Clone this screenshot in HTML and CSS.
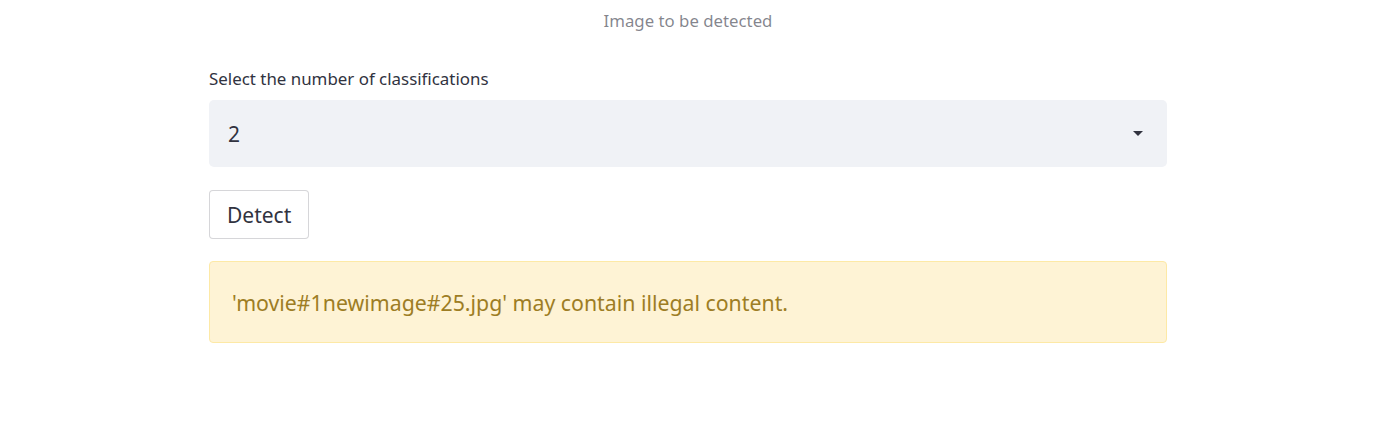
FILE: index.html
```html
<!DOCTYPE html>
<html lang="en">
<head>
    <meta charset="UTF-8">
    <title>Image Detection</title>
    <link rel="stylesheet" href="styles.css">
</head>
<body>
    <div class="main">
        <div class="caption">Image to be detected</div>

        <div class="field">
            <label class="field-label">Select the number of classifications</label>
            <div class="select">
                <span class="select-value">2</span>
                <svg class="select-arrow" width="10" height="6" viewBox="0 0 10 6">
                    <path d="M0 0 L10 0 L5 5 Z" fill="#31333f"/>
                </svg>
            </div>
        </div>

        <div class="actions">
            <button class="btn">Detect</button>
        </div>

        <div class="alert-warning">'movie#1newimage#25.jpg' may contain illegal content.</div>
    </div>
</body>
</html>
```

FILE: styles.css
```css
body {
    font-family: 'Noto Sans', sans-serif;
    margin: 0;
    background: #fff;
    color: #31333f;
}
.main {
    width: 958px;
    margin: 0 auto;
    padding-top: 10px;
}
.caption {
    text-align: center;
    font-size: 16.8px;
    line-height: 22px;
    color: rgba(49, 51, 63, 0.6);
}
.field {
    margin-top: 36px;
}
.field-label {
    display: block;
    font-size: 16.9px;
    line-height: 22px;
    margin-bottom: 10px;
}
.select {
    display: flex;
    align-items: center;
    justify-content: space-between;
    height: 67px;
    padding: 0 24px 0 19px;
    background: #f0f2f6;
    border-radius: 5px;
}
.select-value {
    font-size: 21px;
}
.actions {
    margin-top: 23px;
}
.btn {
    font-family: inherit;
    font-size: 21px;
    color: #31333f;
    background: #fff;
    border: 1px solid rgba(49, 51, 63, 0.2);
    border-radius: 4px;
    height: 49px;
    padding: 0 17px;
}
.alert-warning {
    margin-top: 22px;
    height: 82px;
    box-sizing: border-box;
    display: flex;
    align-items: center;
    padding: 0 22px;
    font-size: 21.3px;
    color: #9d7d24;
    background: #fef3d5;
    border: 1px solid #fde9a6;
    border-radius: 4px;
}
```
